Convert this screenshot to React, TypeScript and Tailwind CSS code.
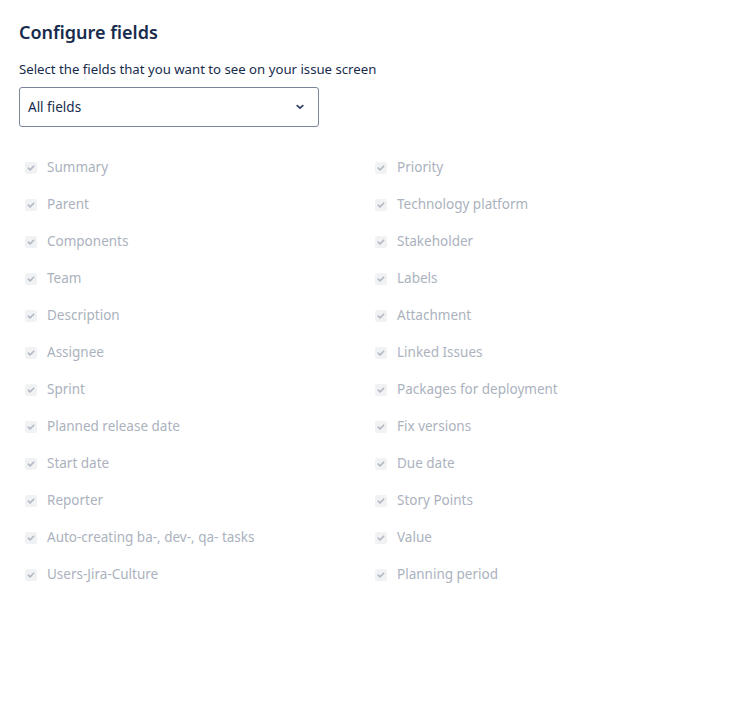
import React from "react";

const left = ["Summary","Parent","Components","Team","Description","Assignee","Sprint","Planned release date","Start date","Reporter","Auto-creating ba-, dev-, qa- tasks","Users-Jira-Culture"];
const right = ["Priority","Technology platform","Stakeholder","Labels","Attachment","Linked Issues","Packages for deployment","Fix versions","Due date","Story Points","Value","Planning period"];

function Item({ label }: { label: string }) {
  return (
    <div className="flex items-center h-[37px]">
      <div className="w-[12px] h-[12px] rounded-[2px] bg-[#f1f2f4] flex items-center justify-center ml-[6px]">
        <svg width="8" height="8" viewBox="0 0 8 8"><path d="M1.3 4.1 L3.1 5.9 L6.7 2.2" stroke="#b3b9c4" strokeWidth="1.6" fill="none" strokeLinecap="round" strokeLinejoin="round"/></svg>
      </div>
      <span className="ml-[10px] text-[13.5px] text-[#abb2be]">{label}</span>
    </div>
  );
}

export default function App() {
  return (
    <div className="w-[737px] h-[711px] bg-white px-[19px] pt-[18px]" style={{ fontFamily: '"Segoe UI", "Noto Sans", sans-serif' }}>
      <h1 className="text-[18px] font-semibold text-[#172b4d] leading-[28px]">Configure fields</h1>
      <p className="mt-[13px] text-[13.2px] text-[#172b4d] leading-[20px]">Select the fields that you want to see on your issue screen</p>
      <div className="mt-[8px] w-[300px] h-[40px] border border-[#7a869a] rounded-[3px] flex items-center justify-between pl-[8px] pr-[12px]">
        <span className="text-[13.5px] text-[#172b4d]">All fields</span>
        <svg width="12" height="12" viewBox="0 0 12 12"><path d="M3.2 4.6 L6 7.2 L8.8 4.6" stroke="#344563" strokeWidth="1.8" fill="none" strokeLinecap="round" strokeLinejoin="round"/></svg>
      </div>
      <div className="mt-[22px] grid grid-cols-[350px_350px]">
        <div className="flex flex-col">{left.map(l => <Item key={l} label={l} />)}</div>
        <div className="flex flex-col">{right.map(l => <Item key={l} label={l} />)}</div>
      </div>
    </div>
  );
}
